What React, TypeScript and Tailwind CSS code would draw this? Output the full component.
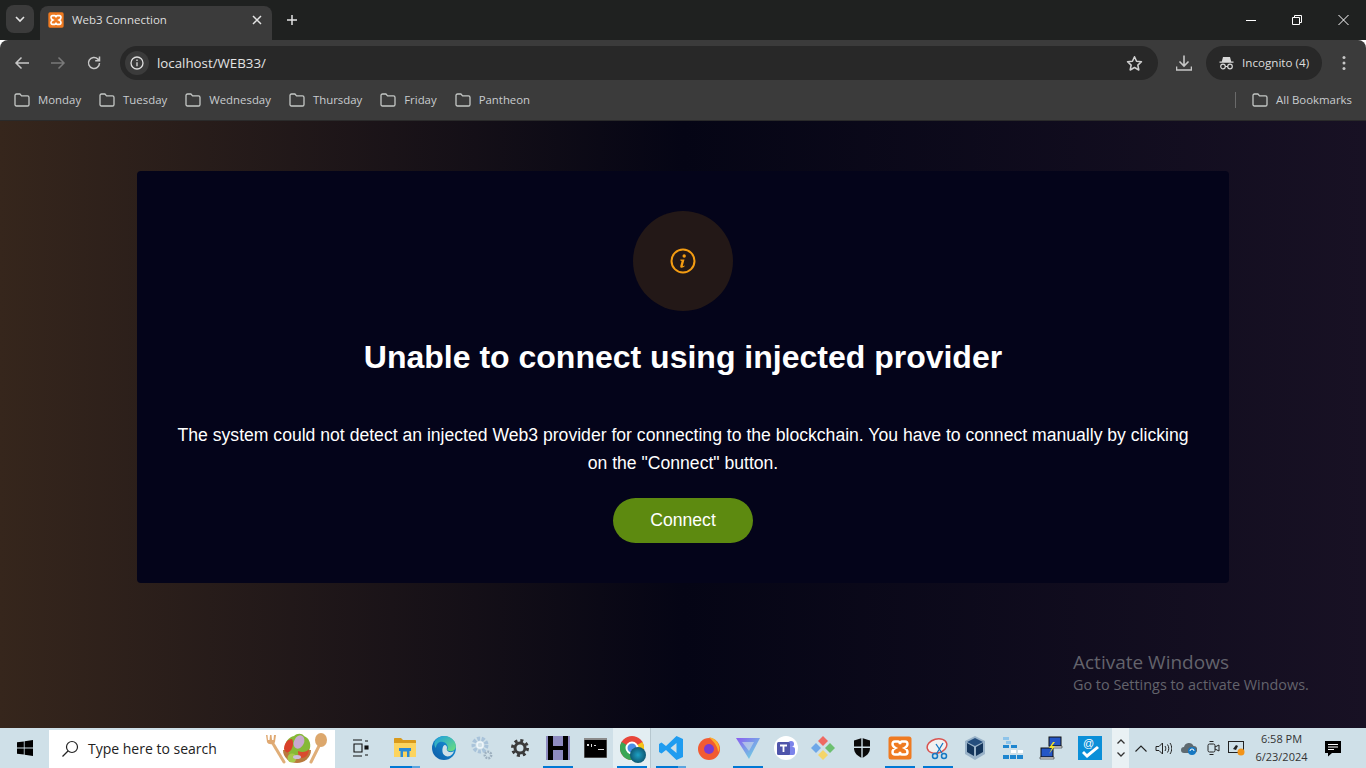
import React from "react";

const Folder = () => (
  <svg width="16" height="14" viewBox="0 0 16 14" fill="none" stroke="#c4c7c5" strokeWidth="1.3" className="shrink-0">
    <path d="M1 2.6C1 1.7 1.6 1 2.500 1h3.400l1.700 1.900h5.900c.9 0 1.500.7 1.500 1.500v7c0 .9-.6 1.600-1.500 1.600h-11C1.600 13 1 12.300 1 11.400z" />
  </svg>
);

const Xampp = ({ s = 16 }: { s?: number }) => (
  <svg width={s} height={s} viewBox="0 0 24 24">
    <rect x="0.5" y="0.5" width="23" height="23" rx="2.5" fill="#ef7a21" />
    <path d="M7 5.5h3.2c1 0 1.5 1.2 1.8 2.6.3-1.4.8-2.6 1.8-2.6H17c1.6 0 2.5 1 2.5 2.6 0 2-1.4 3.1-3 3.9 1.6.8 3 1.9 3 3.9 0 1.6-.9 2.6-2.5 2.6h-3.2c-1 0-1.5-1.2-1.8-2.6-.3 1.4-.8 2.6-1.8 2.6H7c-1.6 0-2.500-1-2.500-2.600 0-2 1.400-3.100 3-3.900-1.600-.8-3-1.900-3-3.900C4.500 6.500 5.400 5.500 7 5.500z" fill="none" stroke="#fff" strokeWidth="2.400" />
  </svg>
);

const marks = ["Monday", "Tuesday", "Wednesday", "Thursday", "Friday", "Pantheon"];

const TabStrip = () => (
  <div className="flex h-10 shrink-0 items-end bg-[#1f2120] pl-1.5">
    <div className="mb-[7px] flex h-7 w-7 items-center justify-center rounded-lg bg-[#3b3b3b]">
      <svg width="10" height="7" viewBox="0 0 10 7" fill="none" stroke="#e3e3e3" strokeWidth="1.6"><path d="M1 1l4 4 4-4" /></svg>
    </div>
    <div className="ml-[6px] flex h-[34px] w-[232px] items-center rounded-t-lg bg-[#3b3b3b] pb-[6px] pl-2 pr-2">
      <Xampp />
      <span className="ml-2 flex-1 text-[11.5px] text-[#dedede] [font-family:'Open_Sans',sans-serif]">Web3 Connection</span>
      <svg width="10" height="10" viewBox="0 0 10 10" stroke="#e3e3e3" strokeWidth="1.5" className="mr-[2px]"><path d="M1 1l8 8M9 1l-8 8" /></svg>
    </div>
    <svg width="12" height="12" viewBox="0 0 12 12" stroke="#e3e3e3" strokeWidth="1.5" className="mb-[14px] ml-[14px]"><path d="M6 1v10M1 6h10" /></svg>
    <div className="flex-1" />
    <div className="mb-[14px] flex items-center">
      <svg width="46" height="12" viewBox="0 0 46 12" stroke="#fff" strokeWidth="1"><path d="M0 6.500h10" /></svg>
      <svg width="46" height="12" viewBox="0 0 46 12" fill="none" stroke="#fff" strokeWidth="1"><path d="M0.500 3.500h7v7h-7zM2.500 3.500v-2h7v7h-2" /></svg>
      <svg width="28" height="12" viewBox="0 0 28 12" stroke="#fff" strokeWidth="1"><path d="M0.500 1l10 10M10.500 1l-10 10" /></svg>
    </div>
  </div>
);

const Toolbar = () => (
  <div className="flex h-[46px] shrink-0 items-center rounded-t-lg bg-[#3b3b3b] pl-[14px]">
    <svg width="16" height="14" viewBox="0 0 16 14" fill="none" stroke="#c7c7c7" strokeWidth="1.500"><path d="M15 7H2M7.500 1.500L2 7l5.500 5.500" /></svg>
    <svg width="16" height="14" viewBox="0 0 16 14" fill="none" stroke="#7a7a7a" strokeWidth="1.500" className="ml-5"><path d="M1 7h13M8.500 1.500L14 7l-5.500 5.500" /></svg>
    <svg width="16" height="16" viewBox="0 0 16 16" fill="none" stroke="#c7c7c7" strokeWidth="1.500" className="ml-5"><path d="M13.500 8a5.500 5.500 0 1 1-1.600-3.900L13.500 5.700M13.500 1.500v4.300H9.200" /></svg>
    <div className="ml-[18px] flex h-[34px] w-[1038px] items-center rounded-full bg-[#282828] pl-[5px] pr-[15px]">
      <div className="flex h-6 w-6 items-center justify-center rounded-full bg-[#3b3b3b]">
        <svg width="14" height="14" viewBox="0 0 14 14" fill="none" stroke="#dedede" strokeWidth="1.300"><circle cx="7" cy="7" r="6" /><path d="M7 6.200v4M7 3.500v1.400" /></svg>
      </div>
      <span className="ml-[8px] flex-1 text-[13.3px] leading-[16px] text-[#e3e3e3] [font-family:'Open_Sans',sans-serif]">localhost/WEB33/</span>
      <svg width="17" height="17" viewBox="0 0 24 24" fill="none" stroke="#d0d0d0" strokeWidth="2.200" strokeLinejoin="round"><path d="M12 2.500l2.900 6.300 6.900.8-5.100 4.700 1.400 6.800-6.100-3.400-6.100 3.400 1.400-6.800-5.100-4.700 6.900-.8z" /></svg>
    </div>
    <svg width="16" height="16" viewBox="0 0 16 16" fill="none" stroke="#c7c7c7" strokeWidth="1.600" className="ml-[18px]"><path d="M8 0.500v10M3.500 6.500L8 11l4.500-4.500M0.500 11.500v3.500h15v-3.500" /></svg>
    <div className="ml-[14px] flex h-[34px] w-[116px] items-center rounded-full bg-[#282828] pl-[13px]">
      <svg width="15" height="14" viewBox="0 0 15 14" fill="#d8d8d8"><path d="M4 1h7l1.200 4.500H14.500v1.200H.5V5.500h2.300z" /><circle cx="4" cy="10.500" r="2.300" fill="none" stroke="#d8d8d8" strokeWidth="1.200" /><circle cx="11" cy="10.500" r="2.300" fill="none" stroke="#d8d8d8" strokeWidth="1.200" /><path d="M6 10h3v1H6z" /></svg>
      <span className="ml-[8px] text-[11.65px] text-[#dedede] [font-family:'Open_Sans',sans-serif]">Incognito (4)</span>
    </div>
    <svg width="4" height="16" viewBox="0 0 4 16" fill="#c7c7c7" className="ml-[20px]"><circle cx="2" cy="2.500" r="1.500" /><circle cx="2" cy="8" r="1.500" /><circle cx="2" cy="13.500" r="1.500" /></svg>
  </div>
);

const Bookmarks = () => (
  <div className="flex h-[35px] shrink-0 items-center border-b border-[#2a2a2a] bg-[#3b3b3b] pb-[6px] pl-[14px] text-[11.4px] text-[#c9cccf] [font-family:'Open_Sans',sans-serif]">
    <div className="flex items-center gap-[18px]">
      {marks.map((m) => (
        <div key={m} className="flex items-center gap-2">
          <Folder />
          <span>{m}</span>
        </div>
      ))}
    </div>
    <div className="flex-1" />
    <div className="h-4 w-px bg-[#6a6a6a]" />
    <div className="ml-4 mr-[14px] flex items-center gap-2">
      <Folder />
      <span>All Bookmarks</span>
    </div>
  </div>
);

const Page = () => (
  <main className="relative flex min-h-0 flex-1 justify-center bg-[linear-gradient(90deg,#36261c_0%,#050515_50%,#181124_100%)] pt-[50px] [font-family:'Liberation_Sans',sans-serif]">
    <div className="flex h-[412px] w-[1092px] flex-col items-center rounded bg-[#04041a] px-10 pt-10 text-white">
      <div className="flex h-[100px] w-[100px] items-center justify-center rounded-full bg-[#231817]">
        <svg width="26" height="26" viewBox="0 0 26 26">
          <circle cx="13" cy="13" r="11.500" fill="none" stroke="#f39c12" strokeWidth="2" />
          <circle cx="14.200" cy="8" r="1.700" fill="#f39c12" />
          <path d="M10.300 11.500h4.200l-1.700 6.200c-.1.500.3.700.7.400l1-.7.300.6c-1 1.100-2 1.700-3.100 1.700-1.200 0-1.700-.7-1.400-1.800l1.300-4.900-1.100-.3z" fill="#f39c12" />
        </svg>
      </div>
      <h1 className="mt-[28px] whitespace-nowrap text-[32px] font-bold leading-[37px]">Unable to connect using injected provider</h1>
      <p className="mt-[45px] w-full text-center text-[17.6px] leading-7">
        The system could not detect an injected Web3 provider for connecting to the blockchain. You have to connect manually by clicking on the "Connect" button.
      </p>
      <button className="mt-[21px] h-[45px] w-[140px] rounded-full bg-[#5d8a10] pb-[1px] text-[17.6px] text-white">Connect</button>
    </div>
    <div className="absolute left-[1073px] top-[529px] text-[#63636c] [font-family:'Open_Sans',sans-serif]">
      <div className="text-[19px] leading-[24px]">Activate Windows</div>
      <div className="text-[14.4px] leading-[22px]">Go to Settings to activate Windows.</div>
    </div>
  </main>
);

const Slot = ({ w, bar, part, light, children }: { w: number; bar?: boolean; part?: boolean; light?: boolean; children: React.ReactNode }) => (
  <div className={`relative flex h-10 shrink-0 items-center justify-center ${light ? "bg-[#e3eef2]" : ""}`} style={{ width: w }}>
    {children}
    {bar && (
      <div className="absolute bottom-0 left-1/2 flex h-[2px] w-[30px] -translate-x-1/2 bg-[#0078d4]">
        {part && <div className="ml-auto w-2 bg-[#5aa5e0]" />}
      </div>
    )}
  </div>
);

const Taskbar = () => (
  <footer className="flex h-10 shrink-0 items-center bg-[#cfe0e8] text-[#1a1a1a] [font-family:'Open_Sans',sans-serif]">
    <div className="flex h-10 w-[49px] shrink-0 items-center justify-center">
      <svg width="16" height="16" viewBox="0 0 16 16" fill="#000"><path d="M0 2.300l6.800-.9v6.200H0zM7.600 1.300L16 0v7.600H7.600zM0 8.400h6.800v6.200L0 13.700zM7.600 8.400H16V16l-8.400-1.200z" /></svg>
    </div>
    <div className="mt-[1px] flex h-[38px] w-[286px] shrink-0 items-center bg-white pl-[12px]">
      <svg width="18" height="18" viewBox="0 0 18 18" fill="none" stroke="#222" strokeWidth="1.200"><circle cx="11" cy="7" r="5.500" /><path d="M7 11l-5.500 5.500" /></svg>
      <span className="ml-[9px] flex-1 text-sm text-[#222]">Type here to search</span>
      <svg width="64" height="34" viewBox="0 0 64 34" className="mr-[7px]">
        <path d="M8 10l12 20" stroke="#e0ae78" strokeWidth="3" strokeLinecap="round" />
        <path d="M2 3l1 7c1 3 7 3 8 0l1-7-2 0-.5 5-1.500 0-.5-5-1.500 0-.5 5-1.500 0-.5-5z" fill="#dfa871" />
        <path d="M57 10L47 30" stroke="#e0ae78" strokeWidth="3" strokeLinecap="round" />
        <ellipse cx="57" cy="8" rx="6" ry="7" fill="#dca76c" />
        <path d="M19 18a14 13 0 0 0 28 0z" fill="#b87a3c" />
        <path d="M22 16c-2-6 3-11 8-12 3-3 8-3 10 0 5 2 7 7 6 12-1 4-3 6-6 7-6 4-14 3-18-7z" fill="#86b936" />
        <path d="M20 17c0-6 4-10 8-10 2 4 1 10-3 13-2 1-4 0-5-3z" fill="#d8402a" />
        <ellipse cx="35" cy="10" rx="5" ry="7" fill="#c8a9cf" transform="rotate(25 35 10)" />
        <path d="M34 19c4 2 9 1 11-2 0 5-3 9-7 9-3 0-4-3-4-7z" fill="#d94b2e" />
        <circle cx="28" cy="26" r="4.500" fill="#a6c94a" />
        <ellipse cx="33" cy="25" rx="4" ry="2" fill="#cdbdda" />
      </svg>
    </div>
    <Slot w={50}>
      <svg width="18" height="18" viewBox="0 0 18 18" fill="none" stroke="#111" strokeWidth="1.100"><path d="M2 1h9M2 17h9M3 5h8v8H3zM14 2h3M14 16h3" /><rect x="14" y="7" width="3" height="3" fill="#111" /></svg>
    </Slot>
    <Slot bar part w={40}>
      <svg width="22" height="20" viewBox="0 0 22 20"><path d="M0 1c0-.6.400-1 1-1h6l2 2h12c.6 0 1 .4 1 1v15c0 .6-.4 1-1 1H1c-.6 0-1-.4-1-1z" fill="#d99a1c" /><path d="M0 5h22v14H0z" fill="#fcd45e" /><path d="M5 10h12v3h-1.500v6H13v-5.500H9V19H6.500v-6H5z" fill="#2a8ad6" /></svg>
    </Slot>
    <Slot w={38}>
      <svg width="24" height="24" viewBox="0 0 24 24">
        <defs>
          <linearGradient id="edgeA" x1="0" y1="1" x2="1" y2="0"><stop offset="0" stopColor="#0c59a4" /><stop offset="1" stopColor="#1b9de2" /></linearGradient>
          <linearGradient id="edgeB" x1="0" y1="0" x2="1" y2="1"><stop offset="0" stopColor="#1b9de2" /><stop offset="1" stopColor="#6ee07a" /></linearGradient>
        </defs>
        <circle cx="12" cy="12" r="12" fill="url(#edgeA)" />
        <path d="M3 5C7-1 17-2 22 5c3 4 2.500 9-2 10-2 .5-4 0-5-1 1.500-2 1-7-4-8C7 5 4 8 4 12 2 10 2 7 3 5z" fill="url(#edgeB)" />
        <path d="M12.500 9c2 0 3 2 2.300 4-.3 1 .7 2.500 2.700 3 1.800.4 3.500 0 4.500-1-.6 2-2 4-4 5-4 1.500-7-1-7.500-4-.4-3 .2-6 2-7z" fill="#cfe0e8" />
      </svg>
    </Slot>
    <Slot w={38}>
      <svg width="24" height="26" viewBox="0 0 24 26" fill="none"><circle cx="10" cy="10" r="6.500" stroke="#a9c3da" strokeWidth="4" strokeDasharray="3 1.500" /><circle cx="10" cy="10" r="3" stroke="#eef5fa" strokeWidth="1.500" /><circle cx="18" cy="20" r="3.200" stroke="#9db0bf" strokeWidth="2.500" strokeDasharray="1.800 1" /></svg>
    </Slot>
    <Slot w={38}>
      <svg width="20" height="20" viewBox="0 0 20 20" fill="none" stroke="#3a3a3a"><circle cx="10" cy="10" r="5" strokeWidth="3" /><circle cx="10" cy="10" r="7.500" strokeWidth="3" strokeDasharray="3 2.900" /></svg>
    </Slot>
    <Slot bar w={38}>
      <svg width="24" height="24" viewBox="0 0 24 24"><rect width="24" height="24" fill="#8e8bc0" /><path d="M2 0h5v24H2zM17 0h5v24h-5zM7 10h10v4H7z" fill="#000" /></svg>
    </Slot>
    <Slot w={36}>
      <svg width="23" height="20" viewBox="0 0 23 20"><rect width="23" height="20" fill="#000" stroke="#888" /><rect y="0" width="23" height="2" fill="#8a8a8a" /><path d="M3 6h2v2H3zM7 6h1v3H7zM10 7h2v1h-2zM14 11h6v1h-6z" fill="#ddd" /></svg>
    </Slot>
    <Slot bar light w={37}>
      <div className="relative h-6 w-6">
        <svg width="24" height="24" viewBox="0 0 24 24"><circle cx="12" cy="12" r="12" fill="#e8463a" /><path d="M12 12L22.400 6A12 12 0 0 1 12 24z" fill="#f5c518" /><path d="M12 12L12 24A12 12 0 0 1 1.600 6z" fill="#3aa655" /><circle cx="12" cy="12" r="5.500" fill="#4a8fe7" stroke="#fff" strokeWidth="2" /></svg>
        <div className="absolute left-[10px] top-[11px] h-[16px] w-[16px] rounded-full bg-[radial-gradient(circle,#1ea1c4,#073b52)]" />
      </div>
    </Slot>
    <div className="h-10 w-px shrink-0 bg-[#b6c7cf]" />
    <Slot bar part w={40}>
      <svg width="24" height="24" viewBox="0 0 24 24"><path d="M17.500 0L24 3v18l-6.500 3L7 14l-4.500 3.500L0 16v-8l2.500-1.500L7 10zM17.500 7l-6 5 6 5z" fill="#1f9cf0" /></svg>
    </Slot>
    <Slot w={36}>
      <svg width="24" height="24" viewBox="0 0 24 24"><circle cx="12" cy="13" r="11" fill="#f25b32" /><path d="M12 1c5 1 9 4 10 9 1 3 0 5-1 6 0-5-3-9-9-15z" fill="#fcb02c" /><circle cx="12" cy="13" r="5" fill="#7a3bd0" /></svg>
    </Slot>
    <Slot bar w={42}>
      <svg width="26" height="24" viewBox="0 0 26 24"><defs><linearGradient id="pv" x1="0" y1="0" x2="1" y2="1"><stop offset="0" stopColor="#8a5cf0" /><stop offset="1" stopColor="#6ae6e0" /></linearGradient></defs><path d="M1 2h24L14 23z" fill="url(#pv)" /><path d="M7 6h12l-5 9z" fill="#cfe0e8" opacity=".6" /></svg>
    </Slot>
    <Slot w={34}>
      <svg width="24" height="24" viewBox="0 0 24 24"><circle cx="12" cy="12" r="12" fill="#fff" /><circle cx="17" cy="8" r="3" fill="#7b83eb" /><rect x="13" y="11" width="8" height="8" rx="2" fill="#7b83eb" /><rect x="3" y="6" width="13" height="13" rx="1.500" fill="#4f55ab" /><path d="M6 9.500h7M9.500 9.500V16" stroke="#fff" strokeWidth="1.800" /></svg>
    </Slot>
    <Slot w={40}>
      <svg width="24" height="24" viewBox="0 0 24 24"><path d="M12 0l5 5-5 5-5-5z" fill="#ef6a62" /><path d="M0 12l5-5 5 5-5 5z" fill="#6ea7e8" /><path d="M14 12l5-5 5 5-5 5z" fill="#6cc070" /><path d="M12 14l5 5-5 5-5-5z" fill="#f4d56a" /></svg>
    </Slot>
    <Slot w={38}>
      <svg width="18" height="20" viewBox="0 0 18 20"><path d="M9 0l8 2.500V10c0 5-3.500 8-8 10-4.500-2-8-5-8-10V2.500z" fill="#0a0a0a" /><path d="M8.300 0h1.400v20H8.300zM1 8.500h16v1.400H1z" fill="#cfe0e8" /></svg>
    </Slot>
    <Slot bar w={38}><Xampp s={24} /></Slot>
    <Slot bar w={38}>
      <svg width="24" height="24" viewBox="0 0 24 24" fill="none"><ellipse cx="11" cy="10" rx="10" ry="7" stroke="#d9534f" strokeWidth="1.500" fill="#f1f1f1" transform="rotate(-15 11 10)" /><path d="M10 8l6 9M17 7l-6 10" stroke="#1479c4" strokeWidth="1.300" /><circle cx="9" cy="20" r="2.500" stroke="#1479c4" strokeWidth="1.500" /><circle cx="18" cy="20" r="2.500" stroke="#1479c4" strokeWidth="1.500" /></svg>
    </Slot>
    <Slot w={36}>
      <svg width="22" height="26" viewBox="0 0 22 26"><path d="M11 1l10 5v13l-10 6L1 19V6z" fill="#9ab3c9" /><path d="M11 3l8 4-8 4-8-4z" fill="#254e7d" /><path d="M3 8l7 4v9l-7-4zM19 8l-7 4v9l7-4z" fill="#15365c" /></svg>
    </Slot>
    <Slot w={40}>
      <svg width="22" height="24" viewBox="0 0 22 24"><g fill="#8ec4ea"><rect x="1" y="1" width="6" height="3" /><rect x="4" y="5" width="5" height="3" /></g><g fill="#1f86cf"><rect x="1" y="9" width="6" height="3" /><rect x="9" y="9" width="6" height="3" /><rect x="1" y="19" width="6" height="4" /><rect x="8" y="19" width="6" height="4" /><rect x="15" y="19" width="6" height="4" /></g><g fill="#fff"><rect x="9" y="14" width="5" height="3" /><rect x="16" y="14" width="5" height="3" /></g></svg>
    </Slot>
    <Slot w={36}>
      <svg width="24" height="24" viewBox="0 0 24 24"><rect x="10" y="1" width="12" height="9" fill="#2557c7" stroke="#111" /><rect x="2" y="12" width="12" height="9" fill="#2557c7" stroke="#111" /><path d="M1 21h14v2H1zM11 10h12v2H11z" fill="#ddd" stroke="#111" strokeWidth=".5" /><path d="M14 6l-4 6h3l-3 6 6-8h-3l3-4z" fill="#f4e22a" /></svg>
    </Slot>
    <Slot w={42}>
      <svg width="24" height="24" viewBox="0 0 24 24"><rect width="24" height="24" fill="#0a8fd8" /><path d="M4 17l5 5L21 12l-2-2-10 8-3-3z" fill="#fff" /><text x="5" y="11" fontSize="11" fill="#fff" fontFamily="Liberation Sans">@</text></svg>
    </Slot>
    <div className="ml-[1px] flex h-10 w-[17px] shrink-0 flex-col items-center justify-center gap-[8px] bg-[#e9f1f4]">
      <svg width="8" height="5" viewBox="0 0 8 5" fill="none" stroke="#333" strokeWidth="1.300"><path d="M.5 4.500L4 1l3.500 3.500" /></svg>
      <svg width="8" height="5" viewBox="0 0 8 5" fill="none" stroke="#333" strokeWidth="1.300"><path d="M.5.500L4 4l3.500-3.500" /></svg>
    </div>
    <div className="flex-1" />
    <div className="flex items-center">
      <svg width="12" height="7" viewBox="0 0 12 7" fill="none" stroke="#222" strokeWidth="1.100" className="mr-[8px]"><path d="M.5 6.500L6 1l5.500 5.500" /></svg>
      <svg width="17" height="13" viewBox="0 0 17 13" fill="none" stroke="#222" className="mr-[9px]"><path d="M1 4.500h3L7.500 1v11L4 8.500H1zM10 4c1 1.500 1 3.500 0 5M12.500 2.500c1.700 2.500 1.700 5.500 0 8M15 1c2.300 3.300 2.300 7.700 0 11" /></svg>
      <svg width="16" height="13" viewBox="0 0 16 13" className="mr-[10px]"><path d="M3 11a3 3 0 0 1 0-6 5 5 0 0 1 9.500-1A3.500 3.500 0 0 1 13 11z" fill="#5f6a70" /><circle cx="11" cy="9" r="4" fill="#1678c2" /><path d="M9 9a2 2 0 0 1 4 0" stroke="#fff" fill="none" /></svg>
      <svg width="13" height="16" viewBox="0 0 13 16" fill="none" stroke="#222" className="mr-[8px]"><rect x="1" y="4" width="7" height="8" rx="1.500" /><path d="M8 7l4-2v6l-4-2M2.500 1.500h4M2.500 14.500h4" /></svg>
      <svg width="18" height="17" viewBox="0 0 18 17" className="mr-[3px]"><rect x=".5" y="1.500" width="15" height="11" fill="none" stroke="#222" /><path d="M5 9l3-4 2 1-2 4z" fill="#222" /><circle cx="13" cy="12" r="3.500" fill="#f39418" /></svg>
    </div>
    <div className="mr-[10px] flex w-[65px] flex-col items-center text-[11px] leading-[18px] text-[#333]">
      <span>6:58 PM</span>
      <span>6/23/2024</span>
    </div>
    <svg width="18" height="17" viewBox="0 0 18 17" className="mr-[24px]"><path d="M1 1h16v12H8l-4 3.500V13H1z" fill="#000" /><path d="M4 4.500h10M4 7h10M4 9.500h6" stroke="#fff" /></svg>
  </footer>
);

export default function App() {
  return (
    <div className="flex h-screen w-full flex-col overflow-hidden">
      <TabStrip />
      <Toolbar />
      <Bookmarks />
      <Page />
      <Taskbar />
    </div>
  );
}
